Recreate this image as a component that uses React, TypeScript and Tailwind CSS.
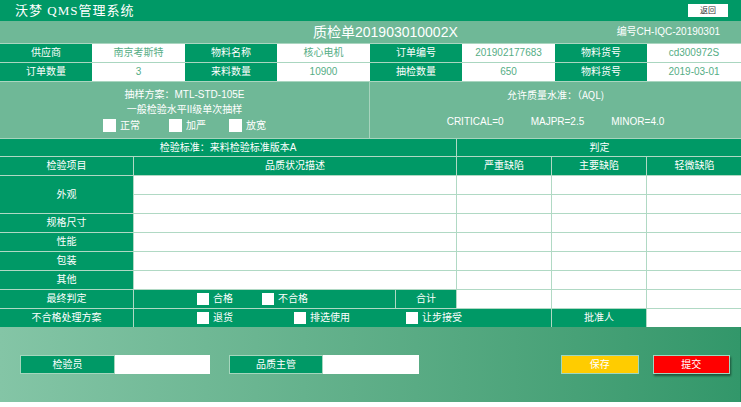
import React from "react";

const Box = ({ size = 12 }: { size?: number }) => (
  <span
    className={
      size === 13
        ? "inline-block h-[13px] w-[13px] shrink-0 bg-white"
        : "inline-block h-[12px] w-[12px] shrink-0 bg-white"
    }
  />
);

const Check = ({ label, w, size = 12 }: { label: string; w: string; size?: number }) => (
  <div className={`flex items-center gap-[4px] ${w}`}>
    <Box size={size} />
    <span>{label}</span>
  </div>
);

const G = ({ children, className = "" }: { children?: React.ReactNode; className?: string }) => (
  <div className={`flex items-center justify-center bg-[#009966] text-white ${className}`}>{children}</div>
);
const W = ({ children, className = "" }: { children?: React.ReactNode; className?: string }) => (
  <div className={`flex items-center justify-center bg-white text-[#55ad85] ${className}`}>{children}</div>
);

export default function App() {
  return (
    <div className="h-[407px] w-[741px] overflow-hidden bg-white font-['Liberation_Sans','Noto_Sans_CJK_SC',sans-serif] text-[10px] leading-none">
      {/* top bar */}
      <div className="flex h-[21px] items-center bg-[#009966] pl-[15px] pr-[13px]">
        <span className="font-['Liberation_Serif','Noto_Sans_CJK_SC',serif] text-[13px] tracking-[1px] text-white">
          沃梦 QMS管理系统
        </span>
        <div className="ml-auto flex h-[13px] w-[40px] items-center justify-center bg-white text-[8px] text-[#333]">
          返回
        </div>
      </div>
      {/* title row */}
      <div className="flex h-[22px] items-center bg-[#6fb897] text-white">
        <span className="ml-[313px] text-[14px]">质检单201903010002X</span>
        <span className="ml-auto mr-[21px] text-[10px]">编号CH-IQC-20190301</span>
      </div>
      {/* info grid */}
      <div className="grid grid-cols-[92px_93px_92px_93px_92px_93px_92px_94px] grid-rows-[18px_18px] gap-y-px bg-[#aad6c0] py-px">
        <G>供应商</G>
        <W>南京考斯特</W>
        <G>物料名称</G>
        <W>核心电机</W>
        <G>订单编号</G>
        <W>201902177683</W>
        <G>物料货号</G>
        <W>cd300972S</W>
        <G>订单数量</G>
        <W>3</W>
        <G>来料数量</G>
        <W>10900</W>
        <G>抽检数量</G>
        <W>650</W>
        <G>物料货号</G>
        <W>2019-03-01</W>
      </div>
      {/* sampling */}
      <div className="flex h-[57px] border-b border-[#a6d4bd] bg-[#6fb897] text-white">
        <div className="flex w-[370px] flex-col items-center border-r border-[#a6d4bd] pt-[8px]">
          <div className="h-[10px]">抽样方案：MTL-STD-105E</div>
          <div className="mt-[5px] h-[10px]">一般检验水平II级单次抽样</div>
          <div className="mt-[4px] flex w-full items-center pl-[103px]">
            <Check label="正常" w="w-[66px]" size={13} />
            <Check label="加严" w="w-[60px]" size={13} />
            <Check label="放宽" w="" size={13} />
          </div>
        </div>
        <div className="flex flex-1 flex-col items-center pt-[8px]">
          <div className="h-[10px] font-['Noto_Sans_CJK_SC',sans-serif]">允许质量水准：（AQL)</div>
          <div className="mt-[17px] flex gap-[27px]">
            <span>CRITICAL=0</span>
            <span>MAJPR=2.5</span>
            <span>MINOR=4.0</span>
          </div>
        </div>
      </div>
      {/* table */}
      <div className="grid grid-cols-[133px_322px_94px_94px_95px] grid-rows-[17px_18px_18px_18px_18px_18px_18px_18px_18px_18px] gap-px bg-[#b0d9c4]">
        <G className="col-span-2">检验标准：来料检验标准版本A</G>
        <G className="col-span-3">判定</G>

        <G>检验项目</G>
        <G>品质状况描述</G>
        <G>严重缺陷</G>
        <G>主要缺陷</G>
        <G>轻微缺陷</G>

        <G className="row-span-2">外观</G>
        <W /><W /><W /><W />
        <W /><W /><W /><W />

        <G>规格尺寸</G>
        <W /><W /><W /><W />
        <G>性能</G>
        <W /><W /><W /><W />
        <G>包装</G>
        <W /><W /><W /><W />
        <G>其他</G>
        <W /><W /><W /><W />

        <G>最终判定</G>
        <div className="flex gap-px">
          <div className="flex w-[261px] items-center bg-[#009966] pl-[63px] text-white">
            <Check label="合格" w="w-[65px]" />
            <Check label="不合格" w="" />
          </div>
          <G className="flex-1">合计</G>
        </div>
        <W /><W /><W />

        <G>不合格处理方案</G>
        <div className="col-span-2 flex items-center bg-[#009966] pl-[63px] text-white">
          <Check label="退货" w="w-[97px]" />
          <Check label="排选使用" w="w-[112px]" />
          <Check label="让步接受" w="" />
        </div>
        <G>批准人</G>
        <W />
      </div>
      {/* bottom */}
      <div className="flex h-[75px] items-center border-r border-[#1f8c5c] bg-linear-to-r from-[#84c5a6] to-[#32976a] pl-[20px] pr-[10px]">
        <div className="flex h-[19px]">
          <div className="flex w-[95px] items-center justify-center border border-[#a5d6bd] bg-[#009966] text-white">
            检验员
          </div>
          <div className="w-[95px] bg-white" />
        </div>
        <div className="ml-[19px] flex h-[19px]">
          <div className="flex w-[94px] items-center justify-center border border-[#a5d6bd] bg-[#009966] text-white">
            品质主管
          </div>
          <div className="w-[96px] bg-white" />
        </div>
        <div className="ml-[142px] flex h-[19px] w-[78px] items-center justify-center border border-[#9fd7c0] bg-[#ffcc00] text-white">
          保存
        </div>
        <div className="ml-[14px] flex h-[19px] w-[78px] items-center justify-center border border-[#9fd7c0] bg-[#ff0000] text-white shadow-[1px_2px_2px_rgba(0,0,0,0.45)]">
          提交
        </div>
      </div>
    </div>
  );
}
